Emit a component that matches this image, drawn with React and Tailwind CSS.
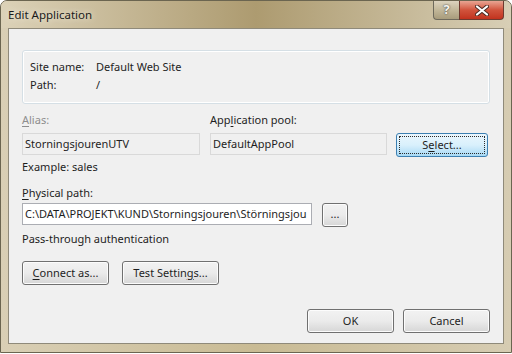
import React from "react";

const FONT = { fontFamily: '"Noto Sans", "Open Sans", sans-serif' };

function Btn({ children, className = "" }) {
  return (
    <button
      className={
        "flex items-center justify-center rounded-[3px] border border-[#707070] bg-gradient-to-b from-[#f2f2f2] via-[#ebebeb] to-[#d6d6d6] text-[11px] text-[#1e1e1e] shadow-[inset_0_0_0_1px_#fcfcfc] " +
        className
      }
    >
      {children}
    </button>
  );
}

function Key({ children }) {
  return <span className="underline underline-offset-2">{children}</span>;
}

export default function App() {
  return (
    <div className="w-[512px] h-[354px] bg-white" style={FONT}>
      <div className="w-[512px] h-[353px] flex flex-col rounded-t-[7px] border border-[#6b6550] bg-gradient-to-r from-[#d9cfb5] via-[#c9bb94] to-[#d6ccb2] overflow-hidden">
        {/* title bar */}
        <div className="h-[27px] flex items-start bg-gradient-to-r from-[#dcd2b8] via-[#ad9b70] to-[#d8cfb6]">
          <span className="ml-[7px] mt-[6px] text-[11.5px] leading-[16px] text-[#1b1b1b] [text-shadow:0_0_6px_#f3eee0]">
            Edit Application
          </span>
          <div className="ml-auto mr-[7px] flex h-[19px]">
            <div className="w-[26px] h-[19px] flex items-center justify-center rounded-bl-[4px] border border-[#6e6a5c] border-t-0 border-r-0 bg-gradient-to-b from-[#dcd3bf] via-[#c2b799] to-[#a89c7c] text-[13px] font-bold text-[#f6f4ee] [text-shadow:0_0_1px_#555,0_0_2px_#555]">
              ?
            </div>
            <div className="w-[45px] h-[19px] flex items-center justify-center rounded-br-[4px] border border-[#6e3a30] border-t-0 bg-gradient-to-b from-[#e8a493] via-[#d1533c] to-[#c2321d]">
              <svg width="14" height="11" viewBox="0 0 14 11">
                <path d="M2 1.5 L12 9.5 M12 1.5 L2 9.5" stroke="#4a2a22" strokeWidth="4" strokeLinecap="round" />
                <path d="M2 1.5 L12 9.5 M12 1.5 L2 9.5" stroke="#ffffff" strokeWidth="2.2" strokeLinecap="round" />
              </svg>
            </div>
          </div>
        </div>

        {/* client area */}
        <div className="mx-[7px] h-[316px] border border-[#8f8a7a] bg-[#f0f0f0] flex flex-col px-[13px] pt-[21px] pb-[10px] text-[11px] text-[#1e1e1e]">
          <div className="h-[54px] rounded-[3px] border border-[#d5dfe5] shadow-[inset_0_0_0_1px_#ffffff] pt-[7px] pl-[7px] flex flex-col">
            <div className="flex h-[18px] items-center">
              <span className="w-[66px]">Site name:</span>
              <span>Default Web Site</span>
            </div>
            <div className="flex h-[18px] items-center">
              <span className="w-[66px]">Path:</span>
              <span>/</span>
            </div>
          </div>

          <div className="mt-[8px] flex">
            <div className="w-[178px] flex flex-col">
              <span className="h-[16px] leading-[16px] text-[#8d8d8d]">
                <Key>A</Key>lias:
              </span>
              <div className="mt-[5px] h-[22px] border border-[#d9d9d9] bg-[#f0f0f0] pl-[2px] leading-[20px]">
                StorningsjourenUTV
              </div>
              <span className="mt-[4px] h-[16px] leading-[16px]">Example: sales</span>
            </div>
            <div className="ml-[10px] w-[177px] flex flex-col">
              <span className="h-[16px] leading-[16px]">
                App<Key>l</Key>ication pool:
              </span>
              <div className="mt-[5px] h-[22px] border border-[#d9d9d9] bg-[#f0f0f0] pl-[2px] leading-[20px]">
                DefaultAppPool
              </div>
            </div>
            <button className="ml-[9px] mt-[21px] w-[92px] h-[24px] rounded-[3px] border border-[#3c7fb1] bg-gradient-to-b from-[#eaf6fd] via-[#d9f0fc] to-[#a7d9f5] p-[2px] text-[11px] text-[#1e1e1e]">
              <span className="flex h-full w-full items-center justify-center border border-dotted border-[#2b2b2b]">
                S<Key>e</Key>lect...
              </span>
            </button>
          </div>

          <span className="mt-[10px] h-[16px] leading-[16px]">
            <Key>P</Key>hysical path:
          </span>
          <div className="mt-[2px] flex items-start">
            <div className="w-[290px] h-[22px] border border-[#abadb3] bg-white pl-[2px] leading-[20px] overflow-hidden whitespace-nowrap">
              C:\DATA\PROJEKT\KUND\Storningsjouren\Störningsjou
            </div>
            <Btn className="ml-[10px] w-[26px] h-[24px] leading-none pb-[4px]">...</Btn>
          </div>
          <span className="mt-[4px] h-[16px] leading-[16px]">Pass-through authentication</span>

          <div className="mt-[14px] flex gap-[13px]">
            <Btn className="w-[87px] h-[24px]">
              <Key>C</Key>onnect as...
            </Btn>
            <Btn className="w-[97px] h-[24px]">
              Test Settin<Key>g</Key>s...
            </Btn>
          </div>

          <div className="mt-auto flex justify-end gap-[9px]">
            <Btn className="w-[87px] h-[24px]">OK</Btn>
            <Btn className="w-[87px] h-[24px]">Cancel</Btn>
          </div>
        </div>
        <div className="flex-1" />
      </div>
    </div>
  );
}
